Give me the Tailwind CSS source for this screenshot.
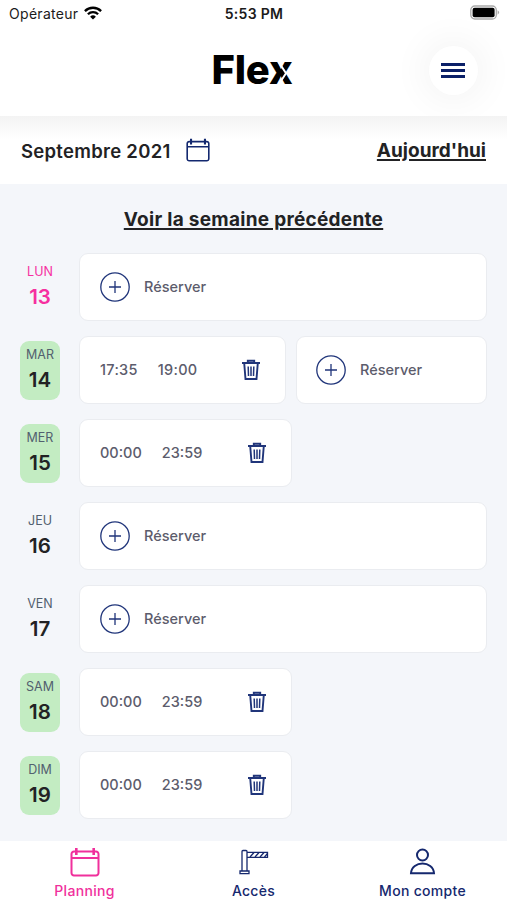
<!DOCTYPE html>
<html lang="fr"><head><meta charset="utf-8"><title>Flex</title>
<meta name="viewport" content="width=device-width, initial-scale=1">
<script src="https://cdn.jsdelivr.net/npm/@tailwindcss/browser@4"></script></head>
<body class="w-[507px] h-[900px] overflow-hidden flex flex-col bg-[#f4f6fa] font-['Inter',sans-serif] text-[#222224]">
<svg class="hidden">
  <symbol id="cal" viewBox="0 0 30 30"><path fill="none" stroke="currentColor" stroke-width="2" d="M4 4.5h22a2.5 2.5 0 0 1 2.500 2.500v19a2.500 2.500 0 0 1-2.500 2.500h-22a2.500 2.500 0 0 1-2.500-2.500v-19a2.500 2.500 0 0 1 2.500-2.500zM1.500 11h27"/><path stroke="currentColor" stroke-width="2.600" d="M6.300 1v7M23.700 1v7"/></symbol>
  <symbol id="plus" viewBox="0 0 30 30"><circle cx="15" cy="15" r="14.200" fill="none" stroke="currentColor" stroke-width="1.300"/><path stroke="currentColor" stroke-width="1.300" d="M9 15h12M15 9v12"/></symbol>
  <symbol id="bin" viewBox="0 0 20 22"><path fill="none" stroke="currentColor" stroke-width="1.900" d="M1 4h18M6.800 3.500V1.700h6.400v1.800M3.200 4l1.300 16h11L16.800 4"/><path fill="none" stroke="currentColor" stroke-width="1.500" d="M7.200 7.500l.3 9.500M10 7.500v9.500M12.800 7.500l-.3 9.500"/></symbol>
</svg>
<header class="h-[116px] shrink-0 bg-white flex flex-col">
  <div class="h-7 grid grid-cols-3 items-center pl-[9px] pr-[7px] pb-[2px] text-[14px] text-[#1b1b1b]">
    <div class="flex items-center gap-[6px]"><span class="tracking-[0.3px]">Opérateur</span>
      <svg class="w-[18px] h-[14px]" viewBox="0 0 18 14" fill="none" stroke="#000" stroke-width="2.300"><path d="M.9 5.100a11.500 11.500 0 0 1 16.200 0M3.900 8.200a7.200 7.200 0 0 1 10.200 0"/><path d="M9 13.600L6.100 10.700a4.100 4.100 0 0 1 5.800 0z" fill="#000" stroke="none"/></svg></div>
    <span class="text-center font-semibold tracking-[0.300px] -ml-[1px]">5:53 PM</span>
    <svg class="justify-self-end w-[30px] h-[16px]" viewBox="0 0 30 16"><rect x=".8" y="1" width="25.500" height="13" rx="4" fill="#fff" stroke="#aaa" stroke-width="1.300"/><rect x="2.600" y="2.700" width="22" height="9.600" rx="2" fill="#000"/><path d="M27.600 5.300q3 2.200 0 4.400z" fill="#aaa"/></svg>
  </div>
  <div class="h-[88px] grid grid-cols-[1fr_auto_1fr] items-center px-[29px]">
    <span></span>
    <div class="relative text-black font-extrabold text-[40px] leading-[48px] tracking-[-0.2px] -mt-[4px] -ml-[3px]">Flex
      <svg class="absolute right-0 top-0 w-[26px] h-[48px]" viewBox="0 0 26 48" fill="none" stroke="#fff" stroke-width="2"><path d="M12 15l8.500 13M12 39.500l8.500-13"/></svg></div>
    <div class="justify-self-end w-[49px] h-[49px] rounded-full bg-white shadow-[0_0_35px_8px_rgba(0,0,0,0.045)] flex flex-col items-center justify-center gap-[3px] pr-[2px] -mt-[4px]"><i class="w-6 h-[3px] bg-[#0b2068]"></i><i class="w-6 h-[3px] bg-[#0b2068]"></i><i class="w-6 h-[3px] bg-[#0b2068]"></i></div>
  </div>
</header>
<div class="h-[68px] shrink-0 bg-[linear-gradient(#f3f3f3_0,#fff_24px)] flex items-center justify-between px-[21px] text-[19px]">
  <div class="flex items-center gap-[15px]"><span class="font-semibold text-[18.500px] tracking-[0.280px] pt-[3px]">Septembre 2021</span><svg class="w-6 h-6 text-[#13286f]"><use href="#cal"/></svg></div>
  <span class="font-bold underline decoration-[1.500px] underline-offset-2 pt-[2px]">Aujourd'hui</span>
</div>
<main class="flex-1 flex flex-col">
  <div class="h-[69px] flex items-center justify-center"><span class="font-bold underline text-[19px] tracking-[0.280px] decoration-[1.500px] underline-offset-2 pt-[3px]">Voir la semaine précédente</span></div>
  <div id="days" class="flex flex-col gap-[15px] pl-5 pr-5"></div>
</main>
<nav class="h-[59px] shrink-0 bg-white grid grid-cols-3 text-[#15286e] text-[14px] tracking-[0.3px] font-medium">
  <div class="flex flex-col items-center text-[#f0309c] pt-[6px]"><svg class="w-[30px] h-[30px]"><use href="#cal"/></svg><span class="leading-5 mt-[4px]">Planning</span></div>
  <div class="flex flex-col items-center pt-[6px]"><svg class="w-[30px] h-[30px]" viewBox="0 0 30 30" fill="none" stroke="currentColor" stroke-width="1.300"><path d="M3 24V4.500q0-1 1-1h3q1 0 1 1V24M1 24h9v2.700H1zM8 5.300h20.500v5H8"/><path stroke-width="1.300" d="M11 10l4-4.500M16 10l4-4.500M21 10l4-4.500M25.500 10l3-3.500"/></svg><span class="leading-5 mt-[4px]">Accès</span></div>
  <div class="flex flex-col items-center pt-[6px]"><svg class="w-[30px] h-[30px]" viewBox="0 0 30 30" fill="none" stroke="currentColor" stroke-width="2"><circle cx="14.500" cy="8" r="5.500"/><path d="M3 26.300c.8-13 22.200-13 23 0z"/></svg><span class="leading-5 mt-[4px]">Mon compte</span></div>
</nav>
<script>
const reserve = (pad) => `<div class="flex-1 h-[68px] rounded-[9px] bg-white border border-[#eaecf0] flex items-center gap-[14px] ${pad}"><svg class="w-[30px] h-[30px] text-[#20357a]"><use href="#plus"/></svg><span class="text-[14.500px] font-medium text-[#5c5c6c]">Réserver</span></div>`;
const slot = (a,b,w,t) => `<div class="${w} h-[68px] rounded-[9px] bg-white border border-[#eaecf0] flex items-center pl-[20px] pr-[24px] text-[14.500px] font-medium text-[#5c5c6c] ${t}"><span>${a}</span><span class="ml-[20px]">${b}</span><svg class="ml-auto w-5 h-[22px] text-[#20357a]"><use href="#bin"/></svg></div>`;
const full = slot('00:00','23:59','w-[213px]','tracking-normal');
const wide = reserve('pl-[20px]');
const days = [['LUN',13,wide],['MAR',14,slot('17:35','19:00','w-[207px]','tracking-[0.3px]')+reserve('pl-[19px]')],['MER',15,full],['JEU',16,wide],['VEN',17,wide],['SAM',18,full],['DIM',19,full]];
document.getElementById('days').innerHTML = days.map(([d,n,c]) => {
  const color = n===13 ? 'text-[#f62fa0]' : 'text-[#222224]';
  const sub = n===13 ? 'text-[#f62fa0]' : 'text-[#52606f]';
  const bg = [14,15,18,19].includes(n) ? 'bg-[#c3ecc2]' : '';
  return `<div class="flex items-center h-[68px]"><div class="w-10 h-[59px] rounded-[9px] ${bg} ${color} flex flex-col items-center pt-[4px]"><span class="${sub} text-[12.500px] leading-[20px]">${d}</span><span class="text-[20.500px] leading-[30px] font-semibold">${n}</span></div><div class="flex flex-1 gap-[10px] ml-[19px]">${c}</div></div>`;
}).join('');
</script>
</body></html>
